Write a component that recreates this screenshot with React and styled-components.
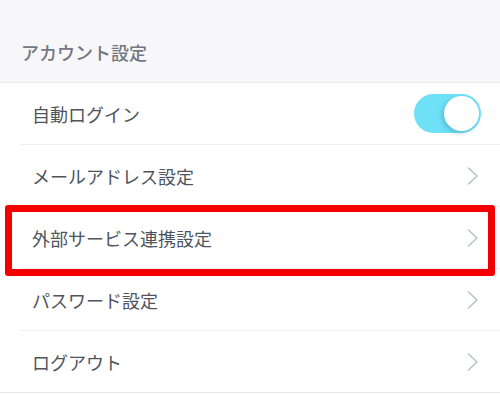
import React, { useState } from 'react';
import styled, { createGlobalStyle } from 'styled-components';

const GlobalStyle = createGlobalStyle`
  html, body {
    margin: 0;
    padding: 0;
    background: #ffffff;
  }
  body {
    font-family: "Noto Sans CJK JP", "Noto Sans", sans-serif;
  }
`;

const Page = styled.div`
  width: 500px;
  height: 394px;
  overflow: hidden;
  background: #ffffff;
`;

const SectionHeader = styled.div`
  display: flex;
  align-items: center;
  box-sizing: border-box;
  height: 83px;
  padding: 22px 0 0 21px;
  background: #f7f7f9;
  border-bottom: 1px solid #e9e9ee;
  color: #737882;
  font-size: 18px;
  font-weight: 500;
`;

const List = styled.ul`
  list-style: none;
  margin: 0;
  padding: 0;
`;

const Row = styled.li`
  position: relative;
  display: flex;
  align-items: center;
  justify-content: space-between;
  box-sizing: border-box;
  height: 62px;
  margin-left: ${({ $last }) => ($last ? '0' : '21px')};
  padding: 0 20px 0 ${({ $last }) => ($last ? '32px' : '11px')};
  border-bottom: 1px solid ${({ $last }) => ($last ? '#e6e6ea' : '#ededf0')};
  cursor: pointer;

  &::after {
    content: '';
    display: ${({ $highlighted }) => ($highlighted ? 'block' : 'none')};
    position: absolute;
    top: -2px;
    bottom: -8px;
    left: -16px;
    right: 5px;
    border: 7.5px solid #f40000;
    border-radius: 3px;
    pointer-events: none;
  }
`;

const Label = styled.span`
  color: #4f545c;
  font-size: 18px;
  line-height: 1;
`;

const Chevron = () => (
  <svg width="12" height="20" viewBox="0 0 12 20" style={{ marginRight: 1 }}>
    <polyline
      points="1.5,2 10,10 1.5,18"
      fill="none"
      stroke="#b9bdc6"
      strokeWidth="1.4"
      strokeLinecap="round"
      strokeLinejoin="round"
    />
  </svg>
);

const ToggleTrack = styled.button`
  position: relative;
  display: flex;
  align-items: center;
  justify-content: ${({ $on }) => ($on ? 'flex-end' : 'flex-start')};
  width: 67px;
  height: 39px;
  margin-right: -1px;
  padding: 0 2px;
  border: none;
  border-radius: 20px;
  background: ${({ $on }) => ($on ? '#6fe1f6' : '#e3e4e8')};
  cursor: pointer;
`;

const ToggleKnob = styled.span`
  width: 35px;
  height: 35px;
  border-radius: 50%;
  background: #ffffff;
  box-shadow: -2px 2px 5px rgba(40, 120, 140, 0.35);
`;

const Toggle = ({ on, onChange }) => (
  <ToggleTrack $on={on} onClick={() => onChange(!on)}>
    <ToggleKnob />
  </ToggleTrack>
);

const items = [
  { label: 'メールアドレス設定' },
  { label: '外部サービス連携設定', highlighted: true },
  { label: 'パスワード設定' },
  { label: 'ログアウト', last: true },
];

const App = () => {
  const [autoLogin, setAutoLogin] = useState(true);

  return (
    <Page>
      <GlobalStyle />
      <SectionHeader>アカウント設定</SectionHeader>
      <List>
        <Row>
          <Label>自動ログイン</Label>
          <Toggle on={autoLogin} onChange={setAutoLogin} />
        </Row>
        {items.map((item) => (
          <Row key={item.label} $highlighted={item.highlighted} $last={item.last}>
            <Label>{item.label}</Label>
            <Chevron />
          </Row>
        ))}
      </List>
    </Page>
  );
};

export default App;
